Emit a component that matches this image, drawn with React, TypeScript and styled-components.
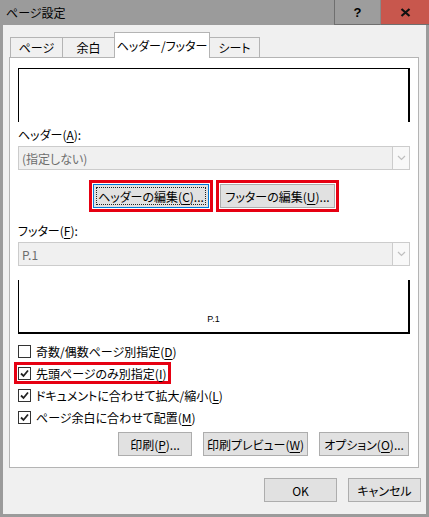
import React from "react";
import styled, { createGlobalStyle } from "styled-components";

const GlobalStyle = createGlobalStyle`
  html, body {
    margin: 0;
    padding: 0;
    background: #f0f0f0;
  }
  body {
    font-family: "Noto Sans CJK JP", "Noto Sans", sans-serif;
    font-size: 12px;
    font-feature-settings: "palt" 1;
    color: #000;
  }
`;

const Window = styled.div`
  width: 429px;
  height: 517px;
  display: flex;
  flex-direction: column;
  box-sizing: border-box;
  background: #f0f0f0;
`;

const TitleBar = styled.div`
  height: 25px;
  display: flex;
  align-items: stretch;
  background: #9b9b9b;
`;

const Title = styled.div`
  flex: 1;
  display: flex;
  align-items: center;
  padding-left: 6px;
  font-size: 12px;
  color: #000;
`;

const CaptionButton = styled.div<{ $close?: boolean }>`
  width: ${({ $close }) => ($close ? "49px" : "46px")};
  display: flex;
  align-items: center;
  justify-content: center;
  box-sizing: border-box;
  background: ${({ $close }) => ($close ? "#c8574d" : "#9d9d9d")};
  border-left: 1px solid ${({ $close }) => ($close ? "#8a8a8a" : "#6f6f6f")};
  border-bottom: 1px solid #6f6f6f;
  font-family: "Liberation Sans", sans-serif;
  font-weight: bold;
  font-size: 13px;
  color: #000;
`;

const Client = styled.div`
  flex: 1;
  display: flex;
  flex-direction: column;
  border: 3px solid #9b9b9b;
  border-top: none;
  padding-top: 8px;
`;

const TabRow = styled.div`
  display: flex;
  align-items: flex-end;
  height: 25px;
  padding-left: 8px;
  margin-bottom: -1px;
`;

const Tab = styled.div<{ $active?: boolean; $w: number }>`
  width: ${({ $w }) => $w}px;
  height: ${({ $active }) => ($active ? "26px" : "21px")};
  box-sizing: border-box;
  display: flex;
  align-items: center;
  justify-content: center;
  background: ${({ $active }) => ($active ? "#fff" : "#f0f0f0")};
  border: 1px solid #b4b4b4;
  border-bottom: ${({ $active }) => ($active ? "none" : "1px solid #b4b4b4")};
  margin-left: -1px;
  position: relative;
  z-index: ${({ $active }) => ($active ? 1 : 0)};
  font-size: 12px;
`;

const Panel = styled.div`
  margin: 0 7px 0 6px;
  background: #fff;
  border: 1px solid #b4b4b4;
  padding: 10px 8px 11px 8px;
  display: flex;
  flex-direction: column;
`;

const Preview = styled.div<{ $footer?: boolean }>`
  height: 54px;
  box-sizing: border-box;
  border-left: 1px solid #000;
  border-right: 2px solid #000;
  border-top: ${({ $footer }) => ($footer ? "none" : "1px solid #000")};
  border-bottom: ${({ $footer }) => ($footer ? "2px solid #000" : "none")};
  margin-top: ${({ $footer }) => ($footer ? "14px" : "0")};
  display: flex;
  align-items: flex-end;
  justify-content: center;
`;

const PreviewText = styled.span`
  font-family: "Liberation Sans", sans-serif;
  font-size: 9px;
  padding-bottom: 8px;
`;

const FieldLabel = styled.div<{ $top: number }>`
  margin-top: ${({ $top }) => $top}px;
  line-height: 16px;
  height: 16px;
`;

const Combo = styled.div`
  margin-top: 3px;
  height: 24px;
  box-sizing: border-box;
  display: flex;
  background: #f0f0f0;
  border: 1px solid #cccccc;
`;

const ComboText = styled.div`
  flex: 1;
  display: flex;
  align-items: center;
  padding-left: 3px;
  color: #6d6d6d;
`;

const ComboArrow = styled.div`
  width: 16px;
  display: flex;
  align-items: center;
  justify-content: center;
  background: #f8f8f8;
  border-left: 1px solid #cccccc;
`;

const EditRow = styled.div`
  margin-top: 10px;
  display: flex;
  justify-content: center;
  gap: 3px;
`;

const Highlight = styled.div<{ $on?: boolean }>`
  display: inline-flex;
  align-items: center;
  border: 3px solid ${({ $on }) => ($on ? "#e60012" : "transparent")};
  padding: 1px;
`;

const Button = styled.div<{ $w: number; $focus?: boolean }>`
  width: ${({ $w }) => $w}px;
  height: 24px;
  box-sizing: border-box;
  display: flex;
  align-items: center;
  justify-content: center;
  background: #e1e1e1;
  border: 1px solid ${({ $focus }) => ($focus ? "#0078d7" : "#adadad")};
  font-size: 12px;
  white-space: nowrap;
`;

const FocusRing = styled.span`
  display: flex;
  align-items: center;
  justify-content: center;
  width: calc(100% - 4px);
  height: calc(100% - 4px);
  box-sizing: border-box;
  border: 1px dotted #222;
`;

const CheckList = styled.div`
  margin-top: 6px;
  margin-left: -4px;
  display: flex;
  flex-direction: column;
  align-items: flex-start;
`;

const CheckRow = styled(Highlight)`
  height: 22px;
  box-sizing: border-box;
  padding: 0 1px 0 1px;
  gap: 5px;
`;

const Box = styled.span`
  width: 13px;
  height: 13px;
  box-sizing: border-box;
  border: 1px solid #333;
  background: #fff;
  display: flex;
  align-items: center;
  justify-content: center;
`;

const ActionRow = styled.div<{ $gap: number }>`
  display: flex;
  justify-content: flex-end;
  gap: ${({ $gap }) => $gap}px;
`;

const PanelActions = styled(ActionRow)`
  margin-top: 4px;
  padding-right: 1px;
`;

const DialogActions = styled(ActionRow)`
  margin-top: 10px;
  padding-right: 5px;
`;

const U = styled.span`
  text-decoration: underline;
  text-underline-offset: 2px;
`;

const Check = ({ on }: { on: boolean }) => (
  <Box>
    {on && (
      <svg width="9" height="9" viewBox="0 0 9 9">
        <path d="M1 4.5 L3.5 7 L8 1.5" fill="none" stroke="#222" strokeWidth="1.8" />
      </svg>
    )}
  </Box>
);

const Chevron = () => (
  <svg width="9" height="6" viewBox="0 0 9 6">
    <path d="M1 1 L4.5 4.5 L8 1" fill="none" stroke="#bfbfbf" strokeWidth="1.2" />
  </svg>
);

const CloseGlyph = () => (
  <svg width="11" height="9" viewBox="0 0 11 9">
    <path d="M1.5 1 L9.5 8 M9.5 1 L1.5 8" stroke="#111" strokeWidth="2.2" />
  </svg>
);

const options = [
  { text: "奇数/偶数ページ別指定", key: "D", on: false, mark: false },
  { text: "先頭ページのみ別指定", key: "I", on: true, mark: true },
  { text: "ドキュメントに合わせて拡大/縮小", key: "L", on: true, mark: false },
  { text: "ページ余白に合わせて配置", key: "M", on: true, mark: false },
];

export default function App() {
  return (
    <>
      <GlobalStyle />
      <Window>
        <TitleBar>
          <Title>ページ設定</Title>
          <CaptionButton>?</CaptionButton>
          <CaptionButton $close>
            <CloseGlyph />
          </CaptionButton>
        </TitleBar>
        <Client>
          <TabRow>
            <Tab $w={53}>ページ</Tab>
            <Tab $w={53}>余白</Tab>
            <Tab $w={96} $active>
              ヘッダー/フッター
            </Tab>
            <Tab $w={51}>シート</Tab>
          </TabRow>
          <Panel>
            <Preview />
            <FieldLabel $top={5}>
              ヘッダー(<U>A</U>):
            </FieldLabel>
            <Combo>
              <ComboText>(指定しない)</ComboText>
              <ComboArrow>
                <Chevron />
              </ComboArrow>
            </Combo>
            <EditRow>
              <Highlight $on>
                <Button $w={116} $focus>
                  <FocusRing>
                    ヘッダーの編集(<U>C</U>)...
                  </FocusRing>
                </Button>
              </Highlight>
              <Highlight $on>
                <Button $w={115}>
                  フッターの編集(<U>U</U>)...
                </Button>
              </Highlight>
            </EditRow>
            <FieldLabel $top={11}>
              フッター(<U>F</U>):
            </FieldLabel>
            <Combo>
              <ComboText>P.1</ComboText>
              <ComboArrow>
                <Chevron />
              </ComboArrow>
            </Combo>
            <Preview $footer>
              <PreviewText>P.1</PreviewText>
            </Preview>
            <CheckList>
              {options.map((o) => (
                <CheckRow key={o.key} $on={o.mark}>
                  <Check on={o.on} />
                  <span>
                    {o.text}(<U>{o.key}</U>)
                  </span>
                </CheckRow>
              ))}
            </CheckList>
            <PanelActions $gap={11}>
              <Button $w={74}>
                印刷(<U>P</U>)...
              </Button>
              <Button $w={105}>
                印刷プレビュー(<U>W</U>)
              </Button>
              <Button $w={90}>
                オプション(<U>O</U>)...
              </Button>
            </PanelActions>
          </Panel>
          <DialogActions $gap={11}>
            <Button $w={73}>OK</Button>
            <Button $w={73}>キャンセル</Button>
          </DialogActions>
        </Client>
      </Window>
    </>
  );
}
